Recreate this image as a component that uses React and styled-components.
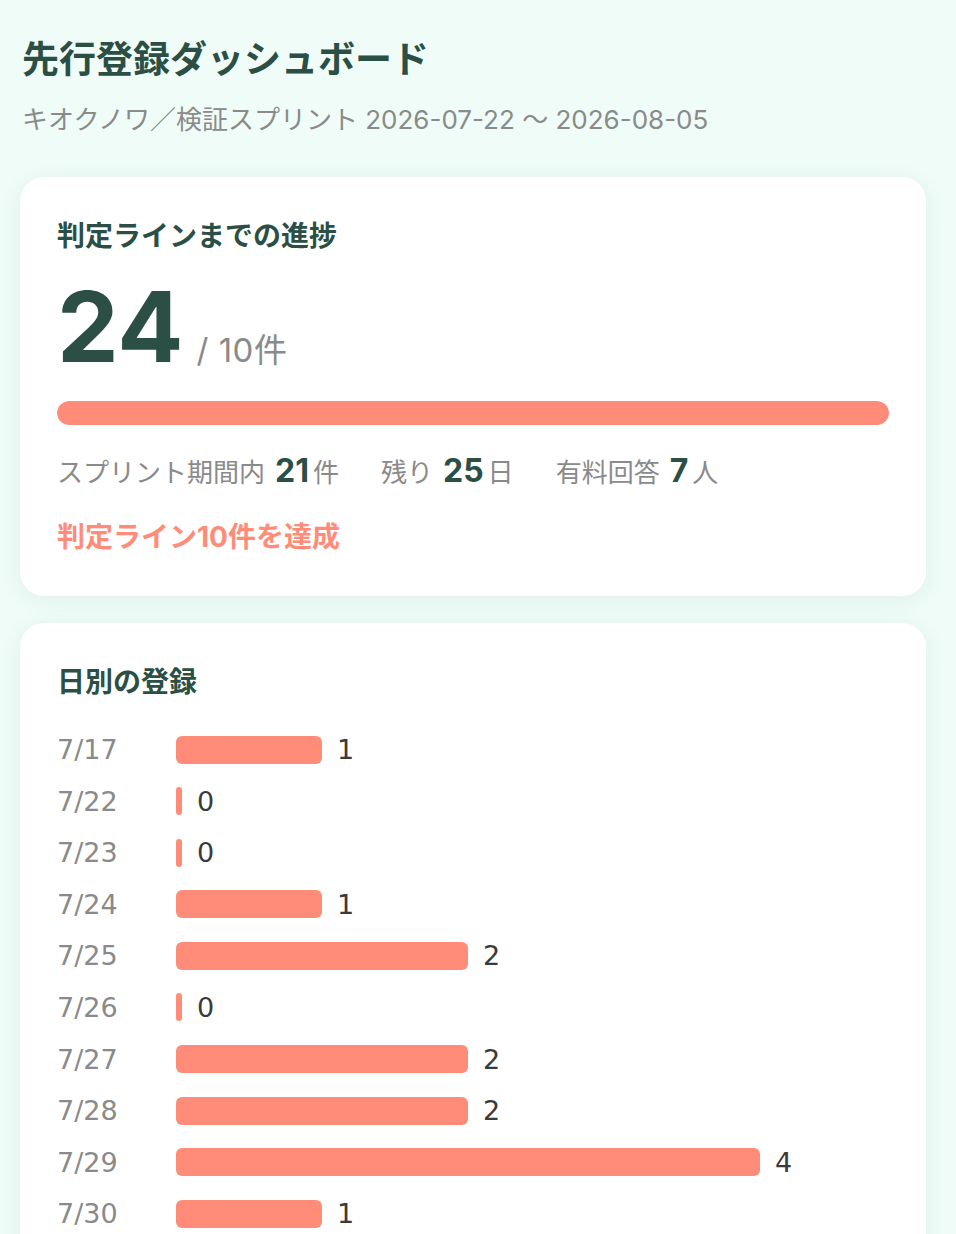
import React from "react";
import styled, { createGlobalStyle } from "styled-components";

const GlobalStyle = createGlobalStyle`
  html, body {
    margin: 0;
    padding: 0;
    background: #effcf7;
  }
  body {
    font-family: "Inter", "Noto Sans CJK JP", sans-serif;
    -webkit-font-smoothing: antialiased;
  }
`;

const Page = styled.main`
  padding: 36px 30px 40px 20px;
`;

const Title = styled.h1`
  margin: 0 0 0 2px;
  font-size: 37px;
  line-height: 48px;
  font-weight: 700;
  color: #2c4f45;
`;

const Subtitle = styled.p`
  margin: 18px 0 39px 2px;
  font-size: 26px;
  line-height: 36px;
  color: #8a8a8a;
`;

const Card = styled.section`
  background: #ffffff;
  border-radius: 24px;
  box-shadow: 0 4px 22px rgba(40, 90, 80, 0.07);
  padding: 40px 37px 41px 37px;

  & + & {
    margin-top: 27px;
  }
`;

const CardTitle = styled.h2`
  margin: 0;
  font-size: 28px;
  line-height: 38px;
  font-weight: 700;
  color: #2c4f45;
`;

const BigRow = styled.div`
  display: flex;
  align-items: baseline;
  gap: 13px;
  margin-top: 24px;
`;

const BigNumber = styled.span`
  font-size: 98px;
  line-height: 96px;
  font-weight: 700;
  color: #2c4f45;
`;

const Goal = styled.span`
  font-size: 33px;
  color: #8a8a8a;
  letter-spacing: 0.5px;
`;

const Track = styled.div`
  margin-top: 26px;
  height: 24px;
  border-radius: 12px;
  background: #f3ece9;
  overflow: hidden;
`;

const Fill = styled.div`
  height: 100%;
  border-radius: 12px;
  background: #ff8c78;
`;

const Stats = styled.div`
  display: flex;
  align-items: baseline;
  gap: 42px;
  margin-top: 26px;
`;

const Stat = styled.span`
  font-size: 26px;
  line-height: 40px;
  color: #8a8a8a;
`;

const StatValue = styled.b`
  margin: 0 4px 0 10px;
  font-size: 32px;
  font-weight: 700;
  color: #2c4f45;
`;

const Achieved = styled.p`
  margin: 26px 0 0;
  font-size: 28px;
  line-height: 36px;
  font-weight: 700;
  color: #ff8c78;
`;

const Chart = styled.div`
  display: flex;
  flex-direction: column;
  gap: 23.6px;
  margin-top: 33px;
`;

const Row = styled.div`
  display: grid;
  grid-template-columns: 119px 1fr;
  align-items: center;
  height: 28px;
`;

const DayLabel = styled.span`
  font-family: "DejaVu Sans", "Inter", sans-serif;
  font-size: 27px;
  color: #8a8a8a;
`;

const BarCell = styled.div`
  display: flex;
  align-items: center;
  gap: 15px;
`;

const Bar = styled.div`
  height: 28px;
  border-radius: ${(p) => (p.$empty ? "3px" : "6px")};
  background: #ff8c78;
`;

const Count = styled.span`
  font-family: "DejaVu Sans", "Inter", sans-serif;
  font-size: 27px;
  color: #3a3a3a;
`;

const daily = [
  ["7/17", 1],
  ["7/22", 0],
  ["7/23", 0],
  ["7/24", 1],
  ["7/25", 2],
  ["7/26", 0],
  ["7/27", 2],
  ["7/28", 2],
  ["7/29", 4],
  ["7/30", 1],
];

const UNIT = 146;

export default function App() {
  const total = 24;
  const goal = 10;
  return (
    <>
      <GlobalStyle />
      <Page>
        <Title>先行登録ダッシュボード</Title>
        <Subtitle>キオクノワ／検証スプリント 2026-07-22 〜 2026-08-05</Subtitle>

        <Card>
          <CardTitle>判定ラインまでの進捗</CardTitle>
          <BigRow>
            <BigNumber>{total}</BigNumber>
            <Goal>/ {goal}件</Goal>
          </BigRow>
          <Track>
            <Fill style={{ width: `${Math.min(100, (total / goal) * 100)}%` }} />
          </Track>
          <Stats>
            <Stat>
              スプリント期間内<StatValue>21</StatValue>件
            </Stat>
            <Stat>
              残り<StatValue>25</StatValue>日
            </Stat>
            <Stat>
              有料回答<StatValue>7</StatValue>人
            </Stat>
          </Stats>
          <Achieved>判定ライン10件を達成</Achieved>
        </Card>

        <Card>
          <CardTitle>日別の登録</CardTitle>
          <Chart>
            {daily.map(([day, n]) => (
              <Row key={day}>
                <DayLabel>{day}</DayLabel>
                <BarCell>
                  <Bar $empty={n === 0} style={{ width: Math.max(6, n * UNIT) }} />
                  <Count>{n}</Count>
                </BarCell>
              </Row>
            ))}
          </Chart>
        </Card>
      </Page>
    </>
  );
}
